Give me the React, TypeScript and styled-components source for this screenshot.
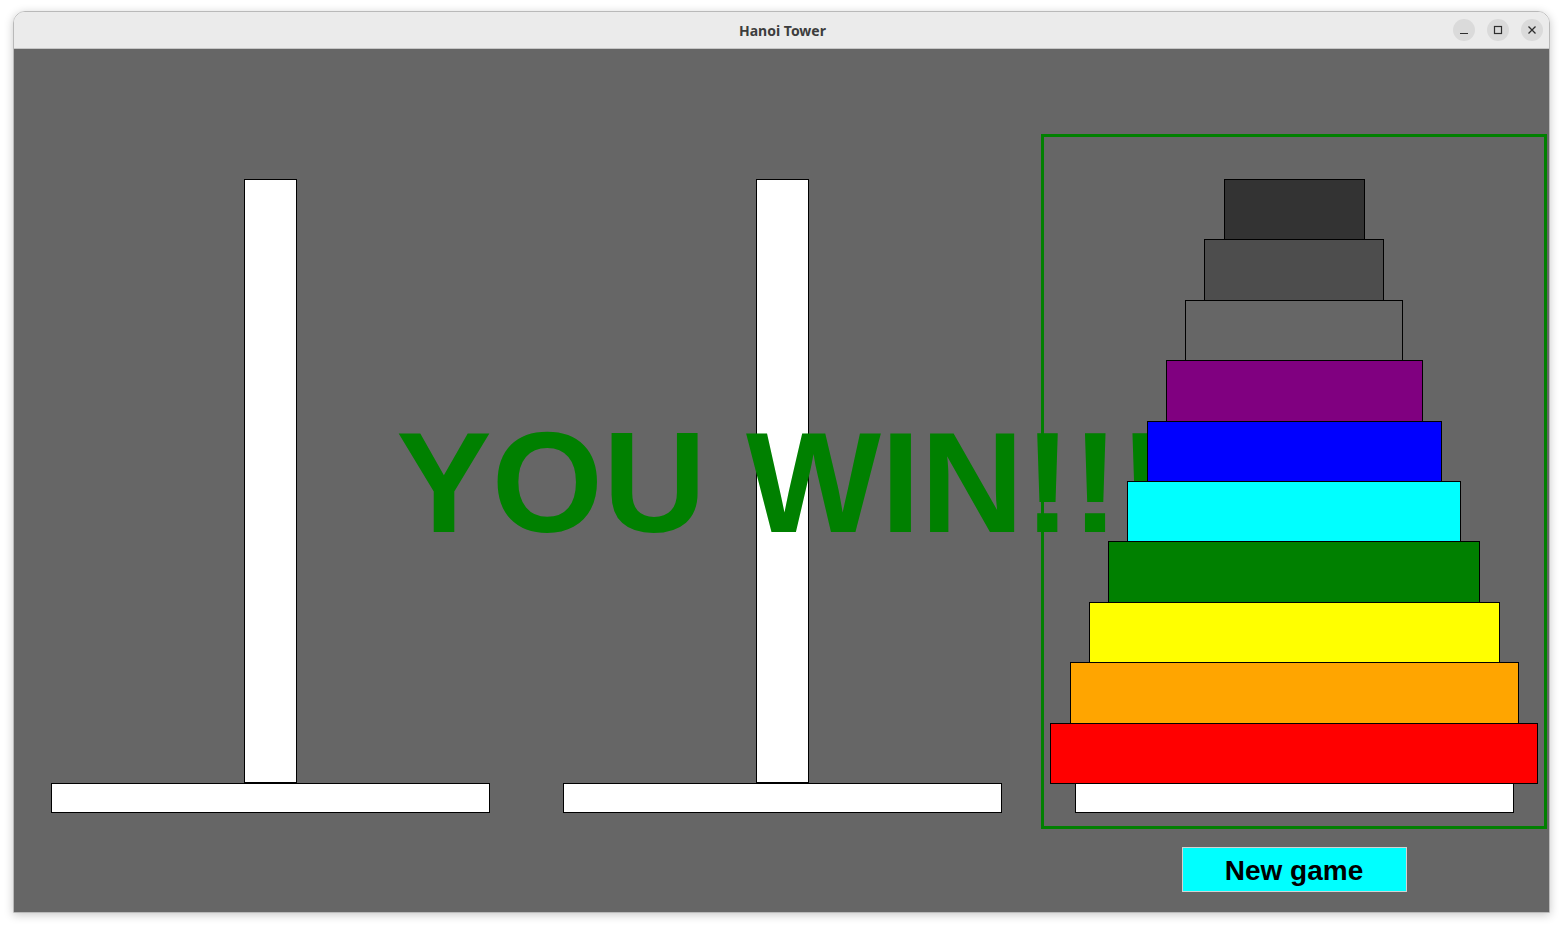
import styled, { createGlobalStyle } from "styled-components";

const GlobalStyle = createGlobalStyle`
  html, body {
    margin: 0;
    padding: 0;
    background: #ffffff;
  }
  body {
    font-family: "Liberation Sans", Arial, sans-serif;
  }
`;

const Desktop = styled.div`
  padding: 11px 14px 0 13px;
  width: 1564px;
  height: 930px;
  box-sizing: border-box;
`;

const Window = styled.div`
  width: 1537px;
  box-sizing: border-box;
  border: 1px solid #b9b9b9;
  border-radius: 12px 12px 0 0;
  overflow: hidden;
  box-shadow: 0 2px 10px rgba(0, 0, 0, 0.22);
`;

const TitleBar = styled.div`
  height: 37px;
  box-sizing: border-box;
  background: #ebebeb;
  border-bottom: 1px solid #c6c6c6;
  display: grid;
  grid-template-columns: 1fr auto 1fr;
  align-items: center;
  padding: 0 6px 0 12px;
`;

const Title = styled.div`
  grid-column: 2;
  font-family: "Noto Sans", "Open Sans", sans-serif;
  font-weight: 700;
  font-size: 14px;
  color: #3d3d3d;
  margin-left: -4px;
`;

const Controls = styled.div`
  grid-column: 3;
  justify-self: end;
  display: flex;
  gap: 12px;
`;

const ControlButton = styled.div`
  width: 22px;
  height: 22px;
  border-radius: 50%;
  background: #dadada;
  display: flex;
  align-items: center;
  justify-content: center;
  color: #2e2e2e;
`;

const Board = styled.div`
  position: relative;
  height: 863px;
  background: #666666;
  display: grid;
  grid-template-columns: repeat(3, 512px);
  overflow: hidden;
`;

const Column = styled.div`
  display: flex;
  flex-direction: column;
  align-items: center;
  padding-top: 85px;
`;

const TowerFrame = styled.div<{ $selected: boolean }>`
  width: 506px;
  height: 695px;
  box-sizing: border-box;
  border: 3px solid ${(p) => (p.$selected ? "#008000" : "transparent")};
  padding-top: 42px;
  display: flex;
  flex-direction: column;
  align-items: center;
  ${(p) => (p.$selected ? "position: relative; z-index: 2;" : "")}
`;

const Peg = styled.div`
  position: relative;
  width: 439px;
  height: 604px;
  display: flex;
  justify-content: center;
`;

const Rod = styled.div`
  width: 53px;
  height: 604px;
  box-sizing: border-box;
  background: #ffffff;
  border: 1px solid #000000;
`;

const DiskStack = styled.div`
  position: absolute;
  inset: 0 0 -1px 0;
  display: flex;
  flex-direction: column;
  justify-content: flex-end;
  align-items: center;
`;

const Disk = styled.div<{ $color: string; $w: number; $h: number }>`
  flex: none;
  width: ${(p) => p.$w}px;
  height: ${(p) => p.$h}px;
  box-sizing: border-box;
  background: ${(p) => p.$color};
  border: 1px solid #000000;

  & + & {
    margin-top: -1px;
  }
`;

const Base = styled.div`
  width: 439px;
  height: 30px;
  box-sizing: border-box;
  background: #ffffff;
  border: 1px solid #000000;
`;

const NewGameButton = styled.button`
  margin-top: 18px;
  width: 225px;
  height: 45px;
  box-sizing: border-box;
  background: #00ffff;
  border: 1px solid #d2d2d2;
  font-family: "Liberation Sans", Arial, sans-serif;
  font-weight: 700;
  font-size: 28px;
  color: #000000;
  padding: 2px 0 0 0;
  cursor: pointer;
`;

const WinBanner = styled.div`
  position: absolute;
  inset: 0;
  z-index: 1;
  display: flex;
  align-items: center;
  justify-content: center;
  padding-top: 4px;
  box-sizing: border-box;
  font-family: "Liberation Sans", Arial, sans-serif;
  font-weight: 700;
  font-size: 143px;
  color: #008000;
  white-space: nowrap;
  pointer-events: none;
`;

const disks = [
  { color: "#333333", h: 61 },
  { color: "#4d4d4d", h: 62 },
  { color: "#666666", h: 61 },
  { color: "#800080", h: 62 },
  { color: "#0000ff", h: 61 },
  { color: "#00ffff", h: 61 },
  { color: "#008000", h: 62 },
  { color: "#ffff00", h: 61 },
  { color: "#ffa500", h: 62 },
  { color: "#ff0000", h: 61 },
];

const towers = [[], [], disks];

const App = () => {
  return (
    <>
      <GlobalStyle />
      <Desktop>
        <Window>
          <TitleBar>
            <Title>Hanoi Tower</Title>
            <Controls>
              <ControlButton>
                <svg width="10" height="10" viewBox="0 0 10 10">
                  <line x1="1" y1="8.5" x2="9" y2="8.5" stroke="currentColor" strokeWidth="1.2" />
                </svg>
              </ControlButton>
              <ControlButton>
                <svg width="10" height="10" viewBox="0 0 10 10">
                  <rect x="1.5" y="1.5" width="7" height="7" fill="none" stroke="currentColor" strokeWidth="1.2" />
                </svg>
              </ControlButton>
              <ControlButton>
                <svg width="10" height="10" viewBox="0 0 10 10">
                  <path d="M1.5 1.5 L8.5 8.5 M8.5 1.5 L1.5 8.5" stroke="currentColor" strokeWidth="1.3" />
                </svg>
              </ControlButton>
            </Controls>
          </TitleBar>
          <Board>
            {towers.map((stack, i) => (
              <Column key={i}>
                <TowerFrame $selected={i === 2}>
                  <Peg>
                    <Rod />
                    {stack.length > 0 && (
                      <DiskStack>
                        {stack.map((d, j) => (
                          <Disk key={j} $color={d.color} $w={Math.round(141 + j * 38.5)} $h={d.h} />
                        ))}
                      </DiskStack>
                    )}
                  </Peg>
                  <Base />
                </TowerFrame>
                {i === 2 && <NewGameButton>New game</NewGameButton>}
              </Column>
            ))}
            <WinBanner>YOU WIN!!!</WinBanner>
          </Board>
        </Window>
      </Desktop>
    </>
  );
};

export default App;
